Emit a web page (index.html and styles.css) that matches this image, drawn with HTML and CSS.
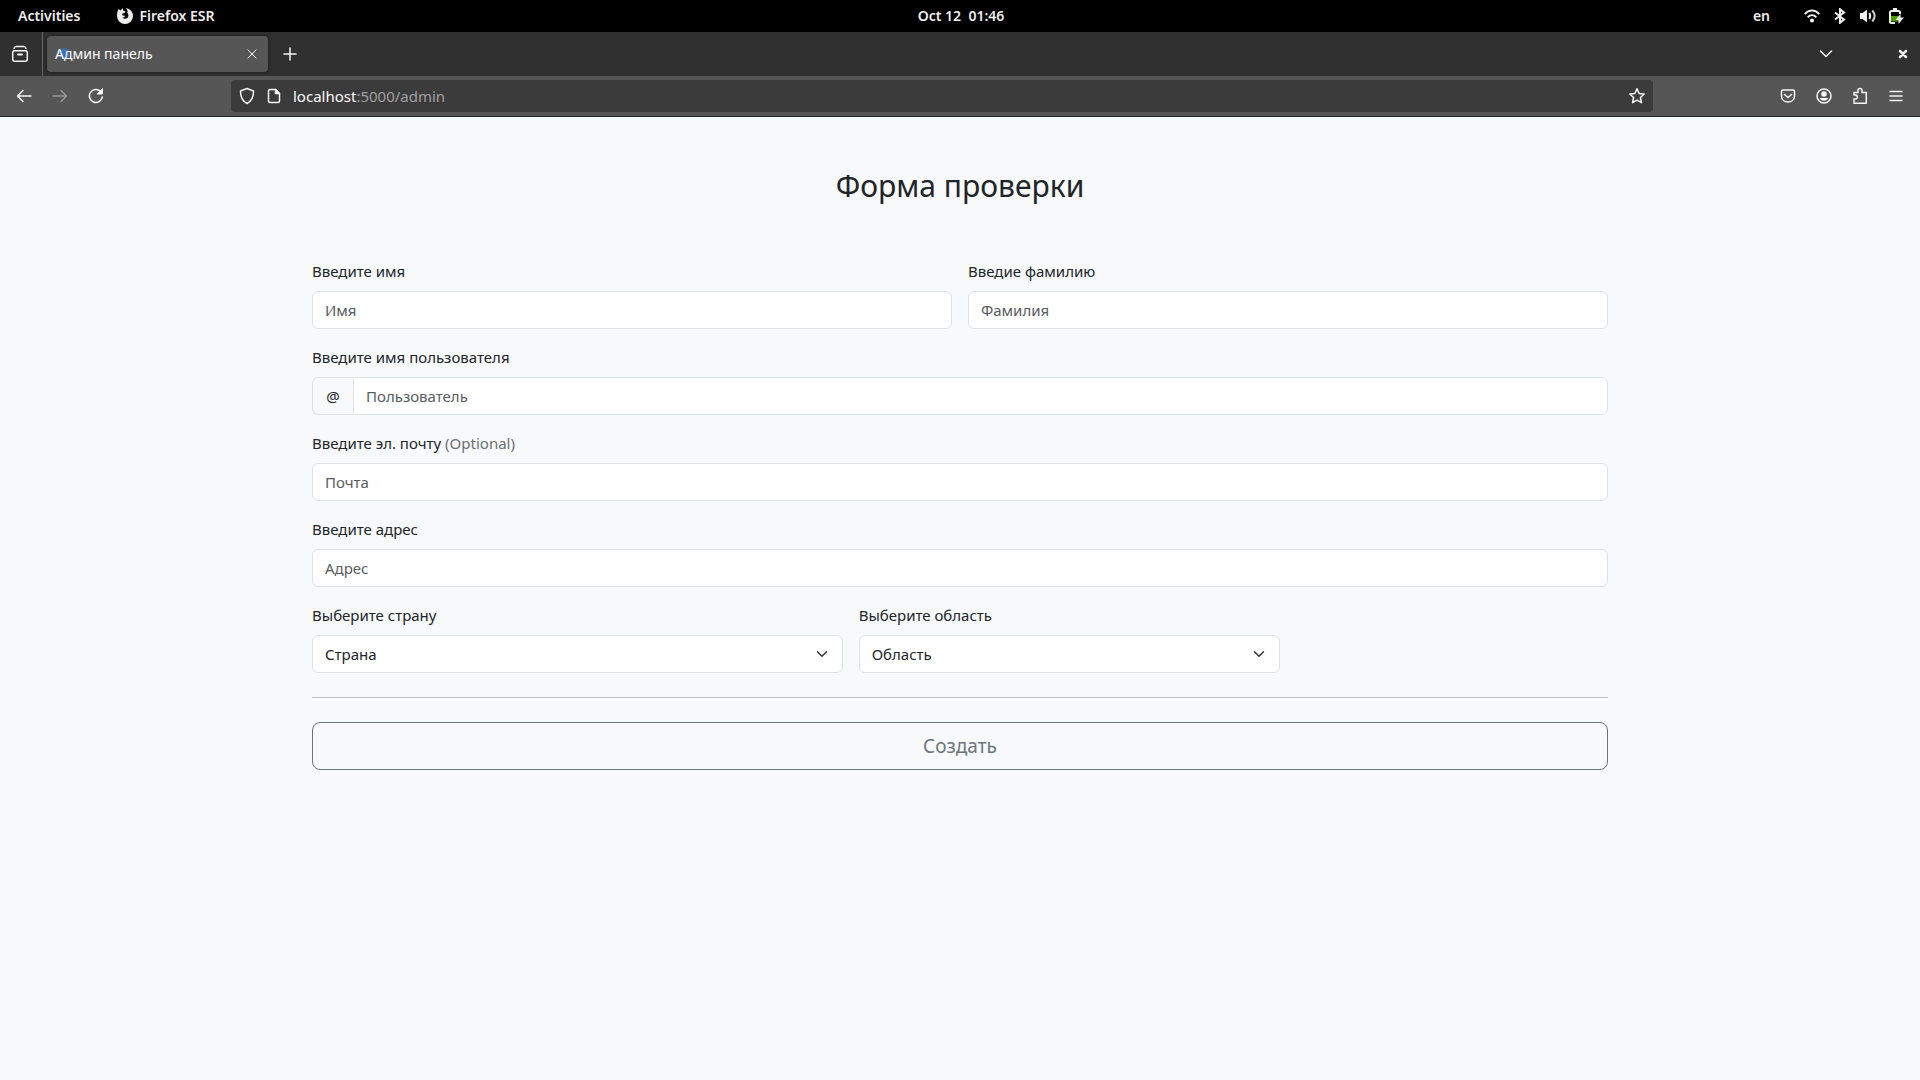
FILE: index.html
```html
<!DOCTYPE html>
<html lang="ru">
<head>
<meta charset="utf-8">
<meta name="viewport" content="width=device-width, initial-scale=1">
<title>Админ панель</title>
<link rel="stylesheet" href="styles.css">
</head>
<body>
<header class="topbar">
  <div class="topbar-left">
    <button class="topbar-button" type="button">Activities</button>
    <button class="topbar-button app-menu" type="button">
      <svg width="16" height="16" viewBox="0 0 16 16" aria-hidden="true"><path fill="#eee" d="M1.500 1 3.500 2.500 6 0 6 2.500 8.500 3.500 7.500 5 5.500 5.500 5 7.500C6 7 7 7.500 8 8L7 9.500H5.500C7 11.500 10.500 11 11.300 8.500 11.800 6.500 11 5 9.500 4L11 3.500 9 .3C13 .5 16 4 16 8A8 8 0 0 1 0 8C0 5 .5 3 1.500 1z"/></svg>
      Firefox ESR
    </button>
  </div>
  <time class="clock">Oct 12&nbsp; 01:46</time>
  <div class="topbar-right">
    <span class="keyboard">en</span>
    <svg width="16" height="16" viewBox="0 0 16 16" fill="none" stroke="#eee" stroke-width="2" aria-hidden="true"><path d="M.7 6.200C5 1.200 11 1.200 15.300 6.200M3.700 9.200c2.600-2.600 6-2.600 8.600 0"/><circle cx="8" cy="12.500" r="1.100" fill="#eee"/></svg>
    <svg width="16" height="16" viewBox="0 0 16 16" fill="none" stroke="#eee" stroke-width="2" aria-hidden="true"><path d="m3 4.500 9 7-4 3.300V1.200l4 3.300-9 7"/></svg>
    <svg width="16" height="16" viewBox="0 0 16 16" fill="none" stroke="#eee" aria-hidden="true"><path fill="#eee" stroke="none" d="M0 5h2.500L7 1.500v13L2.500 11H0z"/><path stroke-width="2" d="M9.300 5c1.200 2 1.200 4 0 6"/><path stroke="#ccc" stroke-width="2" d="M12.300 2.500c3 3.500 3 7.500 0 11"/></svg>
    <svg width="16" height="16" viewBox="0 0 16 16" aria-hidden="true"><path fill="#4e9a06" d="M3 8h9v5.500H3z"/><path d="M7 15H3.500C2.500 15 2 14.500 2 13.500v-9C2 3.500 2.500 3 3.500 3h7c1 0 1.500.5 1.500 1.500V6" fill="none" stroke="#eee" stroke-width="2"/><path fill="#eee" d="M5 0h4v3H5z"/><path fill="#eee" d="M12.500 6v3.500H16L10.500 16v-4H7.500z"/></svg>
  </div>
</header>

<div class="tabstrip">
  <button class="icon-button library" type="button" aria-label="Firefox View">
    <svg width="18" height="18" viewBox="0 0 18 18" class="line"><path d="M3 3.500C3.500 2 4 1.500 5 1.500h8c1 0 1.500.5 2 2"/><rect x="1.700" y="5.700" width="14.600" height="10.600" rx="2"/><path d="M7 9.500h4" stroke-width="2"/></svg>
  </button>
  <div class="tab">
    <span class="tab-title">Админ панель</span>
    <button class="tab-close" type="button" aria-label="Close tab">
      <svg width="10" height="10" viewBox="0 0 10 10" class="line thin"><path d="m1 1 8 8M9 1 1 9"/></svg>
    </button>
  </div>
  <button class="icon-button" type="button" aria-label="New tab">
    <svg width="14" height="14" viewBox="0 0 14 14" class="line"><path d="M7 1v12M1 7h12"/></svg>
  </button>
  <div class="window-controls">
    <button class="icon-button" type="button" aria-label="List all tabs">
      <svg width="14" height="14" viewBox="0 0 14 14" class="line"><path d="m1.500 4 5.500 5.500L12.500 4"/></svg>
    </button>
    <button class="icon-button" type="button" aria-label="Close window">
      <svg width="10" height="10" viewBox="0 0 10 10" class="line heavy"><path d="m2 2 6 6M8 2 2 8"/></svg>
    </button>
  </div>
</div>

<nav class="navbar" aria-label="Navigation">
  <button class="icon-button" type="button" aria-label="Back">
    <svg width="16" height="16" viewBox="0 0 16 16" class="line"><path d="M15 8H1.500M7 2.500 1.500 8 7 13.500"/></svg>
  </button>
  <button class="icon-button" type="button" aria-label="Forward" disabled>
    <svg width="16" height="16" viewBox="0 0 16 16" class="line"><path d="M1 8h13.500M9 2.500 14.500 8 9 13.500"/></svg>
  </button>
  <button class="icon-button" type="button" aria-label="Reload">
    <svg width="16" height="16" viewBox="0 0 16 16" class="line"><path d="M14.300 9A6.500 6.500 0 1 1 12.500 3.300"/><path d="M14.500 1v5h-5z" fill="#fff" stroke-width="1"/></svg>
  </button>
  <div class="urlbar">
    <svg width="16" height="18" viewBox="0 0 16 18" class="line" aria-hidden="true"><path d="M8 1.500 14.500 4c.2 6-1.800 10-6.500 12.500C3.300 14 1.300 10 1.500 4z"/></svg>
    <svg width="14" height="16" viewBox="0 0 14 16" class="line" aria-hidden="true"><path d="M8.500 1.500H3c-1 0-1.500.5-1.500 1.500v10c0 1 .5 1.500 1.500 1.500h8c1 0 1.500-.5 1.500-1.500V5.500z"/><path d="M8.500 1.500v4h4z" fill="#fff"/></svg>
    <div class="address" role="textbox" aria-label="Address">localhost<span class="address-path">:5000/admin</span></div>
    <button class="bookmark" type="button" aria-label="Bookmark">
      <svg width="18" height="18" viewBox="0 0 18 18" class="line"><path d="m9 1.800 2.100 4.700 5.100.5-3.800 3.500 1.100 5.200L9 13.200l-4.500 2.500 1.100-5.200L1.800 7l5.100-.5z"/></svg>
    </button>
  </div>
  <button class="icon-button" type="button" aria-label="Pocket">
    <svg width="16" height="16" viewBox="0 0 16 16" class="line"><path d="M3 2h10c1 0 1.500.5 1.500 1.500V8c0 8-13 8-13 0V3.500C1.500 2.500 2 2 3 2z"/><path d="M4.500 6.500 8 9.500l3.500-3"/></svg>
  </button>
  <button class="icon-button" type="button" aria-label="Account">
    <svg width="16" height="16" viewBox="0 0 16 16" class="line"><circle cx="8" cy="8" r="7"/><circle cx="8" cy="6" r="2.700" fill="#fff" stroke="none"/><path d="M3.800 10h8.400c-1.400 3.700-7 3.700-8.400 0z" fill="#fff" stroke="none"/></svg>
  </button>
  <button class="icon-button" type="button" aria-label="Extensions">
    <svg width="16" height="18" viewBox="0 0 16 18" class="line"><path d="M2 8V5.500h4V3.300c0-2.400 4-2.400 4 0v2.200h4.300v10.800H2V12h1.500c2.400 0 2.400-4 0-4z"/></svg>
  </button>
  <button class="icon-button" type="button" aria-label="Menu">
    <svg width="14" height="14" viewBox="0 0 14 14" class="line"><path d="M1 2.500h12M1 7h12M1 11.500h12"/></svg>
  </button>
</nav>

<main class="page">
  <h2 class="page-title">Форма проверки</h2>
  <form class="form">
    <div class="field half">
      <label for="first">Введите имя</label>
      <input class="control" id="first" type="text" placeholder="Имя">
    </div>
    <div class="field half">
      <label for="last">Введие фамилию</label>
      <input class="control" id="last" type="text" placeholder="Фамилия">
    </div>
    <div class="field">
      <label for="user">Введите имя пользователя</label>
      <div class="group">
        <span class="addon">@</span>
        <input class="control" id="user" type="text" placeholder="Пользователь">
      </div>
    </div>
    <div class="field">
      <label for="email">Введите эл. почту <span class="muted">(Optional)</span></label>
      <input class="control" id="email" type="email" placeholder="Почта">
    </div>
    <div class="field">
      <label for="address">Введите адрес</label>
      <input class="control" id="address" type="text" placeholder="Адрес">
    </div>
    <div class="field country">
      <label for="country">Выберите страну</label>
      <select class="control select" id="country"><option>Страна</option></select>
    </div>
    <div class="field region">
      <label for="region">Выберите область</label>
      <select class="control select" id="region"><option>Область</option></select>
    </div>
    <hr class="divider">
    <button class="submit" type="submit">Создать</button>
  </form>
</main>
</body>
</html>
```
FILE: styles.css
```css
*, *::before, *::after { box-sizing: border-box; }

body {
  margin: 0;
  min-height: 100vh;
  background: #f8f9fb;
  color: #212529;
  font: 15px/24px "Noto Sans", "Open Sans", sans-serif;
}

button, input, select { font: inherit; color: inherit; }
button { margin: 0; padding: 0; border: 0; background: none; }
svg { display: block; flex: none; }

.line {
  fill: none;
  stroke: #f5f5f5;
  stroke-width: 1.5;
  stroke-linecap: round;
  stroke-linejoin: round;
}
.thin { stroke-width: 1; }
.heavy { stroke-width: 2.5; }

/* Desktop top bar */
.topbar {
  display: grid;
  grid-template-columns: 1fr auto 1fr;
  align-items: center;
  height: 32px;
  padding: 0 16px 0 18px;
  background: #000;
  color: #eee;
  font-size: 14px;
  font-weight: 600;
}
.topbar-left, .topbar-right, .app-menu { display: flex; align-items: center; }
.topbar-left { gap: 37px; }
.app-menu { gap: 6px; }
.topbar-right { justify-content: flex-end; gap: 12px; }
.keyboard { margin-right: 22px; }

/* Browser tabs */
.tabstrip {
  display: flex;
  align-items: center;
  height: 44px;
  background: #303030;
}
.icon-button {
  display: flex;
  align-items: center;
  justify-content: center;
  flex: none;
  width: 36px;
  height: 32px;
}
.icon-button:disabled { opacity: .4; }
.library {
  width: 43px;
  height: 44px;
  padding-right: 3px;
  border-right: 1px solid #666;
}
.tab {
  position: relative;
  z-index: 0;
  display: flex;
  align-items: center;
  justify-content: space-between;
  width: 221px;
  height: 36px;
  margin: 0 4px;
  padding: 0 11px 0 8px;
  border-radius: 4px;
  background: #565656;
  box-shadow: 0 0 4px rgba(0, 0, 0, .5);
  color: #fbfbfe;
  font-size: 14px;
}
.tab::before {
  content: "";
  position: absolute;
  z-index: -1;
  left: 12px;
  top: 12px;
  width: 10px;
  height: 11px;
  border-radius: 50%;
  background: #3a72b0;
}
.window-controls { display: flex; gap: 41px; margin-left: auto; margin-right: -1px; }

/* Navigation toolbar */
.navbar {
  display: flex;
  align-items: center;
  height: 41px;
  padding: 0 6px;
  border-bottom: 1px solid #202020;
  background: #565656;
}
.urlbar {
  display: flex;
  align-items: center;
  flex: 1;
  gap: 12px;
  height: 32px;
  margin: 0 117px;
  padding: 0 7px 0 8px;
  border-radius: 4px;
  background: #3b3b3b;
}
.address { flex: 1; color: #fbfbfe; }
.address-path { color: #a0a0a0; }

/* Form page */
.page {
  max-width: 1320px;
  margin: 0 auto;
  padding: 48px 12px;
}
.page-title {
  margin: 0 0 52px;
  font-size: 30px;
  font-weight: 400;
  line-height: 42px;
  text-align: center;
}
.form {
  display: grid;
  grid-template-columns: repeat(12, minmax(0, 1fr));
  gap: 16px;
}
.field { display: flex; flex-direction: column; gap: 8px; grid-column: span 12; }
.half { grid-column: span 6; }
.country { grid-column: span 5; }
.region { grid-column: span 4; }
.muted { color: #6c7075; }

.control {
  width: 100%;
  height: 38px;
  padding: 0 12px;
  border: 1px solid #dee2e6;
  border-radius: 6px;
  background: #fff;
}
.control::placeholder { color: #595c5f; opacity: 1; }
.select {
  appearance: none;
  background: #fff url("data:image/svg+xml,%3csvg xmlns='http://www.w3.org/2000/svg' viewBox='0 0 16 16'%3e%3cpath fill='none' stroke='%23343a40' stroke-linecap='round' stroke-linejoin='round' stroke-width='2' d='m2 5 6 6 6-6'/%3e%3c/svg%3e") no-repeat right 12px center / 16px 12px;
}
.group { display: flex; }
.addon {
  width: 41px;
  padding: 6px 0;
  border: 1px solid #dee2e6;
  border-right: 0;
  border-radius: 6px 0 0 6px;
  text-align: center;
}
.group .control { flex: 1; border-radius: 0 6px 6px 0; }

.divider {
  grid-column: span 12;
  width: 100%;
  margin: 8px 0;
  border: 0;
  border-top: 1px solid #bec0c2;
}
.submit {
  grid-column: span 12;
  height: 48px;
  border: 1px solid #6c757d;
  border-radius: 8px;
  color: #6c757d;
  font-size: 19px;
}
```
